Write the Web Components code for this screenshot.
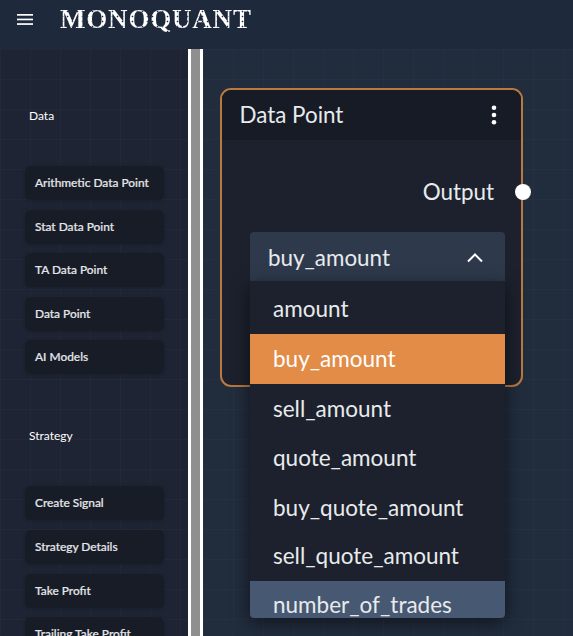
<!DOCTYPE html>
<html>
<head>
<meta charset="utf-8">
<title>Monoquant</title>
<style>
    html, body { margin: 0; height: 100%; overflow: hidden; background: #1e293b; }
    body { font-family: Lato, sans-serif; }
</style>
</head>
<body>
<mq-app>
    <mq-topbar slot="top"></mq-topbar>
    <mq-sidebar slot="side">
        <mq-section title="Data">
            <mq-item>Arithmetic Data Point</mq-item>
            <mq-item>Stat Data Point</mq-item>
            <mq-item>TA Data Point</mq-item>
            <mq-item>Data Point</mq-item>
            <mq-item>AI Models</mq-item>
        </mq-section>
        <mq-section title="Strategy">
            <mq-item>Create Signal</mq-item>
            <mq-item>Strategy Details</mq-item>
            <mq-item>Take Profit</mq-item>
            <mq-item>Trailing Take Profit</mq-item>
        </mq-section>
    </mq-sidebar>
    <mq-canvas slot="main">
        <mq-node title="Data Point">
            <mq-select value="buy_amount">
                <mq-option>amount</mq-option>
                <mq-option selected>buy_amount</mq-option>
                <mq-option>sell_amount</mq-option>
                <mq-option>quote_amount</mq-option>
                <mq-option>buy_quote_amount</mq-option>
                <mq-option style="height: 48.4px">sell_quote_amount</mq-option>
                <mq-option hover>number_of_trades</mq-option>
            </mq-select>
        </mq-node>
    </mq-canvas>
</mq-app>
<script>
const GRID = `
    background-image:
        linear-gradient(rgba(148,163,184,.035) 1px, transparent 1px),
        linear-gradient(90deg, rgba(148,163,184,.035) 1px, transparent 1px);
    background-size: 30px 30px;`;

class MqApp extends HTMLElement {
    connectedCallback() {
        this.attachShadow({ mode: 'open' });
        this.shadowRoot.innerHTML = `
            <style>
                :host { display: grid; grid-template-columns: 188px 15px 1fr; grid-template-rows: 49px 1fr; height: 636px; overflow: hidden; }
                .top { grid-column: 1 / -1; }
                .split { background: #8f8f8f; border-left: 3px solid #fff; border-right: 3px solid #fff; }
                .col { min-width: 0; min-height: 0; overflow: hidden; }
            </style>
            <div class="top"><slot name="top"></slot></div>
            <div class="col"><slot name="side"></slot></div>
            <div class="split"></div>
            <div class="col"><slot name="main"></slot></div>
        `;
    }
}

class MqTopbar extends HTMLElement {
    connectedCallback() {
        this.attachShadow({ mode: 'open' });
        this.shadowRoot.innerHTML = `
            <style>
                :host { display: flex; align-items: center; height: 49px; background: #1e293b; color: #fff; box-sizing: border-box; padding: 0 0 11px 17px; }
                svg { display: block; }
                /* speckle clipped into the letters, for the ornate look of the wordmark */
                .logo {
                    margin-left: 27px;
                    font: 700 27px/30px "Liberation Serif", serif;
                    letter-spacing: .8px;
                    color: transparent;
                    background:
                        radial-gradient(circle, #1e293b .7px, transparent 1.1px) 0 0 / 5px 5px,
                        #fff;
                    -webkit-background-clip: text;
                    background-clip: text;
                }
            </style>
            <svg width="16" height="11" viewBox="0 0 16 11" fill="#fff"><rect y="0" width="16" height="1.7"/><rect y="4.6" width="16" height="1.7"/><rect y="9.2" width="16" height="1.7"/></svg>
            <span class="logo">MONOQUANT</span>
        `;
    }
}

class MqSidebar extends HTMLElement {
    connectedCallback() {
        this.attachShadow({ mode: 'open' });
        this.shadowRoot.innerHTML = `
            <style>
                :host { display: block; height: 587px; overflow: hidden; box-sizing: border-box; padding: 5px 24px 0 25px; background-color: #1e2433; ${GRID} }
            </style>
            <slot></slot>
        `;
    }
}

class MqSection extends HTMLElement {
    connectedCallback() {
        this.attachShadow({ mode: 'open' });
        this.shadowRoot.innerHTML = `
            <style>
                :host { display: block; }
                h3 { margin: 0; height: 112px; box-sizing: border-box; padding: 54px 0 0 4px; font: 400 12px/16px Lato, sans-serif; color: #fff; }
                .list { display: flex; flex-direction: column; gap: 9.6px; }
            </style>
            <h3>${this.getAttribute('title')}</h3>
            <div class="list"><slot></slot></div>
        `;
    }
}

class MqItem extends HTMLElement {
    connectedCallback() {
        this.attachShadow({ mode: 'open' });
        this.shadowRoot.innerHTML = `
            <style>
                :host { display: flex; align-items: center; width: 139px; height: 34px; box-sizing: border-box; padding-left: 10px; background: #181c27; border-radius: 6px; font: 500 11.9px/16px Lato, sans-serif; -webkit-text-stroke: .2px; color: #e4e6ea; box-shadow: 0 1px 4px rgba(0,0,0,.18); white-space: nowrap; }
            </style>
            <slot></slot>
        `;
    }
}

class MqCanvas extends HTMLElement {
    connectedCallback() {
        this.attachShadow({ mode: 'open' });
        this.shadowRoot.innerHTML = `
            <style>
                :host { display: block; height: 587px; box-sizing: border-box; padding: 39px 0 0 17px; background-color: #212c3d; ${GRID} }
            </style>
            <slot></slot>
        `;
    }
}

class MqNode extends HTMLElement {
    connectedCallback() {
        this.attachShadow({ mode: 'open' });
        this.shadowRoot.innerHTML = `
            <style>
                :host { display: block; width: 302.5px; height: 299px; box-sizing: border-box; position: relative; background: #1c212d; border: 2px solid #b9793f; border-radius: 11px; color: #e8eaec; }
                .head { display: flex; align-items: center; justify-content: space-between; height: 50px; padding: 0 24px 0 17.5px; background: #171b26; border-radius: 9px 9px 0 0; font: 400 22.4px/26px Lato, sans-serif; }
                .head svg { display: block; }
                .out { height: 54px; padding: 39px 26.5px 0 0; box-sizing: border-box; text-align: right; font: 400 22.4px/26px Lato, sans-serif; }
                .port { position: absolute; right: -10.7px; top: 94.3px; width: 16px; height: 16px; border-radius: 50%; background: #fff; }
                .body { padding: 0 0 0 28px; margin-top: 37.7px; }
            </style>
            <div class="head"><span>${this.getAttribute('title')}</span>
                <svg width="6" height="20" viewBox="0 0 6 20" fill="#fff"><circle cx="3" cy="2.8" r="2.3"/><circle cx="3" cy="10" r="2.3"/><circle cx="3" cy="17.2" r="2.3"/></svg>
            </div>
            <div class="out">Output</div>
            <div class="port"></div>
            <div class="body"><slot></slot></div>
        `;
    }
}

class MqSelect extends HTMLElement {
    connectedCallback() {
        this.attachShadow({ mode: 'open' });
        this.shadowRoot.innerHTML = `
            <style>
                :host { display: block; position: relative; width: 255px; }
                .field { display: flex; align-items: center; justify-content: space-between; height: 52px; box-sizing: border-box; padding: 0 21px 0 18px; background: #2e3a4c; border-radius: 4px 4px 0 0; font: 400 22.4px/26px Lato, sans-serif; color: #e8eaec; }
                svg { display: block; }
                .menu { position: absolute; z-index: 2; left: 0; top: 49.3px; width: 100%; height: 337.4px; box-sizing: border-box; padding-top: 3.3px; overflow: hidden; background: #1c212d; border-radius: 0 0 4px 4px; box-shadow: 0 4px 18px rgba(0,0,0,.55); }
            </style>
            <div class="field"><span>${this.getAttribute('value')}</span>
                <svg width="18" height="11" viewBox="0 0 18 11" fill="none" stroke="#fff" stroke-width="2"><path d="M2 9.5 9 2.5 16 9.5"/></svg>
            </div>
            <div class="menu"><slot></slot></div>
        `;
    }
}

class MqOption extends HTMLElement {
    connectedCallback() {
        this.attachShadow({ mode: 'open' });
        this.shadowRoot.innerHTML = `
            <style>
                :host { display: flex; align-items: center; box-sizing: border-box; height: 49.4px; padding-left: 23px; font: 400 22.5px/28px Lato, sans-serif; color: #e8eaec; }
                :host([selected]) { height: 50.4px; background: #e28c47; color: #fff; }
                :host([hover]) { background: #475872; }
            </style>
            <slot></slot>
        `;
    }
}

customElements.define('mq-app', MqApp);
customElements.define('mq-topbar', MqTopbar);
customElements.define('mq-sidebar', MqSidebar);
customElements.define('mq-section', MqSection);
customElements.define('mq-item', MqItem);
customElements.define('mq-canvas', MqCanvas);
customElements.define('mq-node', MqNode);
customElements.define('mq-select', MqSelect);
customElements.define('mq-option', MqOption);
</script>
</body>
</html>
